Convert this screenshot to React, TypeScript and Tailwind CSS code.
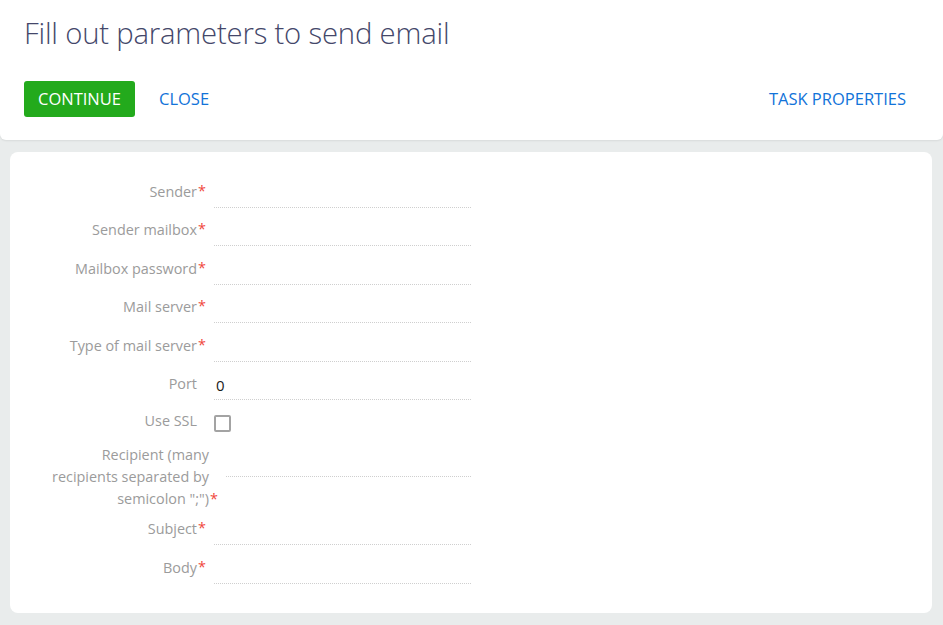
import React from "react";

const font = { fontFamily: '"Open Sans", "Noto Sans", sans-serif' };

function Row({ label, required = true, value, h = "h-[38.4px]" }: { label: string; required?: boolean; value?: string; h?: string }) {
  return (
    <div className={`flex items-end ${h}`}>
      <div className="w-[187px] shrink-0 text-right pb-[6px] leading-[20px] text-[14.4px] text-[#9b9b9b]">
        <span className="relative">
          {label}
          {required && <span className="absolute left-full top-[-1px] pl-[1px] text-[#f0463c]">*</span>}
        </span>
      </div>
      <div className="ml-[17px] w-[257px] h-[32px] border-b border-dotted border-[#cfcfcf] flex items-center pl-[2px] pt-[4px] text-[15px] text-[#1a1a1a]">
        {value}
      </div>
    </div>
  );
}

export default function App() {
  return (
    <div className="w-[943px] h-[625px] bg-[#e9ecec] overflow-hidden" style={font}>
      <div className="h-[140px] bg-white rounded-b-[6px] shadow-[0_1px_2px_rgba(0,0,0,0.08)] px-[24px] pt-[13px]">
        <h1 className="text-[29.3px] font-light leading-[40px] text-[#44476a] tracking-[-0.2px]">Fill out parameters to send email</h1>
        <div className="flex items-center mt-[28px]">
          <button className="h-[36px] w-[111px] bg-[#23aa1c] rounded-[3px] text-white text-[16.5px] leading-none">CONTINUE</button>
          <button className="ml-[24px] text-[#1273d9] text-[16.5px] leading-none">CLOSE</button>
          <div className="flex-1" />
          <button className="mr-[13px] text-[#1273d9] text-[16.5px] leading-none">TASK PROPERTIES</button>
        </div>
      </div>
      <div className="mt-[12px] ml-[10px] mr-[11px] h-[461px] bg-white rounded-[8px] pt-[17.6px]">
        <Row label="Sender" />
        <Row label="Sender mailbox" />
        <Row label="Mailbox password" />
        <Row label="Mail server" />
        <Row label="Type of mail server" />
        <Row label="Port" required={false} value="0" />
        <div className="flex items-start h-[40px]">
          <div className="w-[187px] shrink-0 text-right pt-[11px] leading-[20px] text-[14.4px] text-[#9b9b9b]">Use SSL</div>
          <div className="ml-[17px] mt-[15px] w-[17px] h-[17px] border-2 border-[#a3a3a3] rounded-[2px]" />
        </div>
        <div className="flex items-start h-[67px]">
          <div className="w-[199px] shrink-0 text-right pt-[4px] leading-[22px] text-[14.4px] text-[#9b9b9b] whitespace-nowrap">
            Recipient (many<br />recipients separated by<br />
            <span className="relative">semicolon ";")<span className="absolute left-full top-[-1px] pl-[1px] text-[#f0463c]">*</span></span>
          </div>
          <div className="ml-[17px] mt-[7px] w-[245px] h-[30px] border-b border-dotted border-[#cfcfcf]" />
        </div>
        <Row label="Subject" h="h-[38px]" />
        <Row label="Body" h="h-[39px]" />
      </div>
    </div>
  );
}
